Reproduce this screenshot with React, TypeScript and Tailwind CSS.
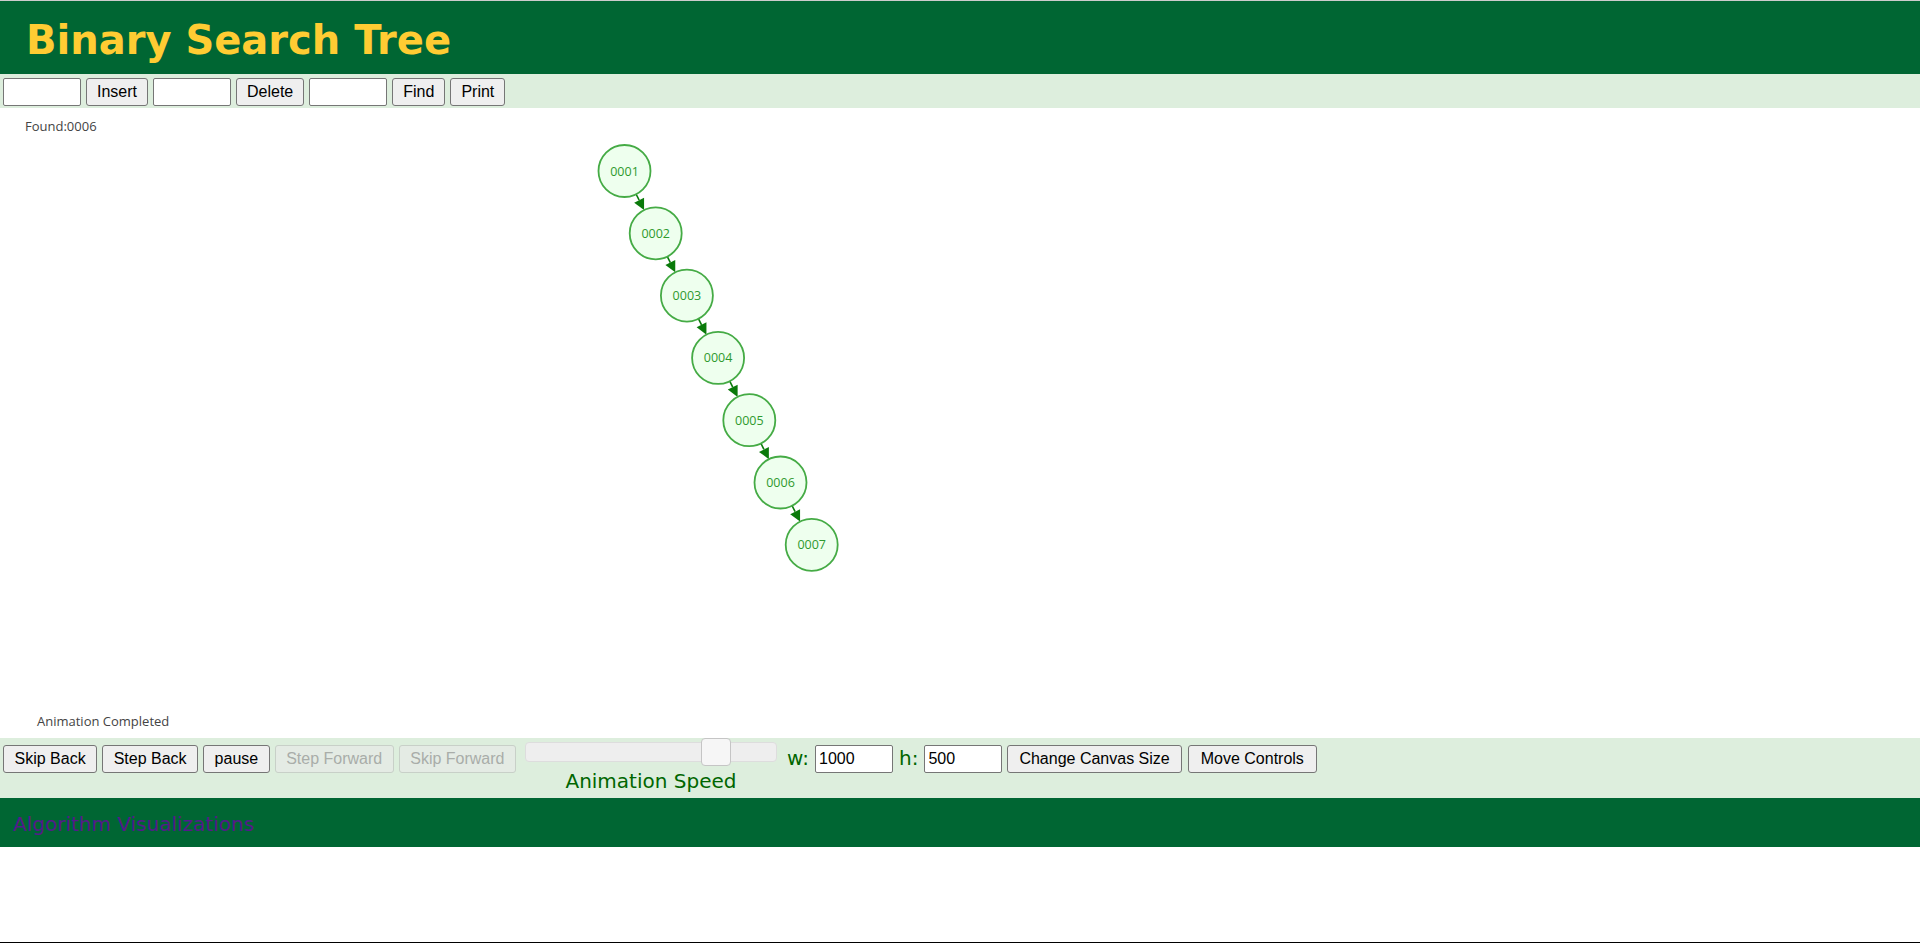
import React from 'react';

const NODES = ['0001', '0002', '0003', '0004', '0005', '0006', '0007'];
const R = 26;

const nodePos = (i: number) => ({ x: 624.5 + i * 31.2, y: 63 + i * 62.3 });

const btn =
  'h-[28px] rounded-[3px] border border-[#767676] bg-[#efefef] text-[16px] text-black font-["Liberation_Sans",Arial,sans-serif] leading-none';
const btnOff =
  'h-[28px] rounded-[3px] border border-[#c8d0c8] bg-[#e4ebe4] text-[16px] text-[#a9ada9] font-["Liberation_Sans",Arial,sans-serif] leading-none';
const field =
  'h-[28px] w-[78px] rounded-[2px] border border-[#767676] bg-white px-[3px] text-[16px] text-black font-["Liberation_Sans",Arial,sans-serif] outline-none';

function Tree() {
  return (
    <svg width="1920" height="630" className="block">
      <text x="25" y="23" fontSize="13" fill="#444" fontFamily="'Open Sans', sans-serif">
        Found:0006
      </text>
      {NODES.slice(1).map((_, i) => {
        const a = nodePos(i);
        const b = nodePos(i + 1);
        const dx = b.x - a.x;
        const dy = b.y - a.y;
        const len = Math.hypot(dx, dy);
        const ux = dx / len;
        const uy = dy / len;
        const sx = a.x + ux * R;
        const sy = a.y + uy * R;
        const tx = b.x - ux * R;
        const ty = b.y - uy * R;
        const hx = tx - ux * 11;
        const hy = ty - uy * 11;
        const px = -uy * 5.5;
        const py = ux * 5.5;
        return (
          <g key={i}>
            <line x1={sx} y1={sy} x2={hx} y2={hy} stroke="#0a7a0a" strokeWidth="1.6" />
            <polygon
              points={`${tx},${ty} ${hx + px},${hy + py} ${hx - px},${hy - py}`}
              fill="#0a7a0a"
            />
          </g>
        );
      })}
      {NODES.map((n, i) => {
        const p = nodePos(i);
        return (
          <g key={n}>
            <circle cx={p.x} cy={p.y} r={R} fill="#eeffee" stroke="#45ab45" strokeWidth="1.8" />
            <text
              x={p.x}
              y={p.y + 4.5}
              textAnchor="middle"
              fontSize="12.5"
              fill="#2e9a2e"
              fontFamily="'Open Sans', sans-serif"
            >
              {n}
            </text>
          </g>
        );
      })}
      <text x="37" y="618" fontSize="13" fill="#444" fontFamily="'Open Sans', sans-serif">
        Animation Completed
      </text>
    </svg>
  );
}

export default function App() {
  return (
    <div className="h-[943px] w-[1920px] overflow-hidden bg-white flex flex-col font-['DejaVu_Sans',Verdana,sans-serif]">
      <div className="h-px bg-[#cccccc]" />
      <header className="h-[73px] bg-[#006633] flex items-center pl-[26px] pt-[4px]">
        <h1 className="text-[40px] font-bold text-[#ffcc33] leading-none">Binary Search Tree</h1>
      </header>

      <div className="h-[34px] bg-[#ddeedd] flex items-start gap-[5px] pl-[3px] pt-[4px]">
        <input className={field} />
        <button className={`${btn} px-[10px]`}>Insert</button>
        <input className={field} />
        <button className={`${btn} px-[10px]`}>Delete</button>
        <input className={field} />
        <button className={`${btn} px-[10px]`}>Find</button>
        <button className={`${btn} px-[10px]`}>Print</button>
      </div>

      <div className="h-[630px]">
        <Tree />
      </div>

      <div className="h-[60px] bg-[#ddeedd] flex items-start pl-[3px] pt-[7px]">
        <div className="flex items-start gap-[5px]">
          <button className={`${btn} px-[10.5px]`}>Skip Back</button>
          <button className={`${btn} px-[10.5px]`}>Step Back</button>
          <button className={`${btn} px-[10.5px]`}>pause</button>
          <button className={`${btnOff} px-[10.5px]`}>Step Forward</button>
          <button className={`${btnOff} px-[10.5px]`}>Skip Forward</button>
        </div>
        <div className="ml-[9px] w-[252px] flex flex-col items-center">
          <div className="relative w-[252px] h-[20px] mt-[-3px] rounded-[4px] border border-[#dddddd] bg-[#eeeeee]">
            <div className="absolute left-[175px] top-[-5px] w-[30px] h-[28px] rounded-[4px] border border-[#c5c5c5] bg-[#f6f6f6]" />
          </div>
          <span className="mt-[9px] text-[20px] leading-none text-[#006600]">Animation Speed</span>
        </div>
        <span className="ml-[10px] mt-[1px] text-[20px] leading-[24px] text-[#006600]">w:</span>
        <input className={`${field} ml-[6px]`} defaultValue="1000" />
        <span className="ml-[6px] mt-[1px] text-[20px] leading-[24px] text-[#006600]">h:</span>
        <input className={`${field} ml-[6px]`} defaultValue="500" />
        <button className={`${btn} px-[11px] ml-[5px]`}>Change Canvas Size</button>
        <button className={`${btn} px-[12px] ml-[6px]`}>Move Controls</button>
      </div>

      <footer className="h-[49px] bg-[#006633] flex items-center pl-[13px] pt-[2px]">
        <a className="text-[20px] text-[#551a8b] leading-none">Algorithm Visualizations</a>
      </footer>

      <div className="flex-1" />
      <div className="h-px bg-black" />
    </div>
  );
}
